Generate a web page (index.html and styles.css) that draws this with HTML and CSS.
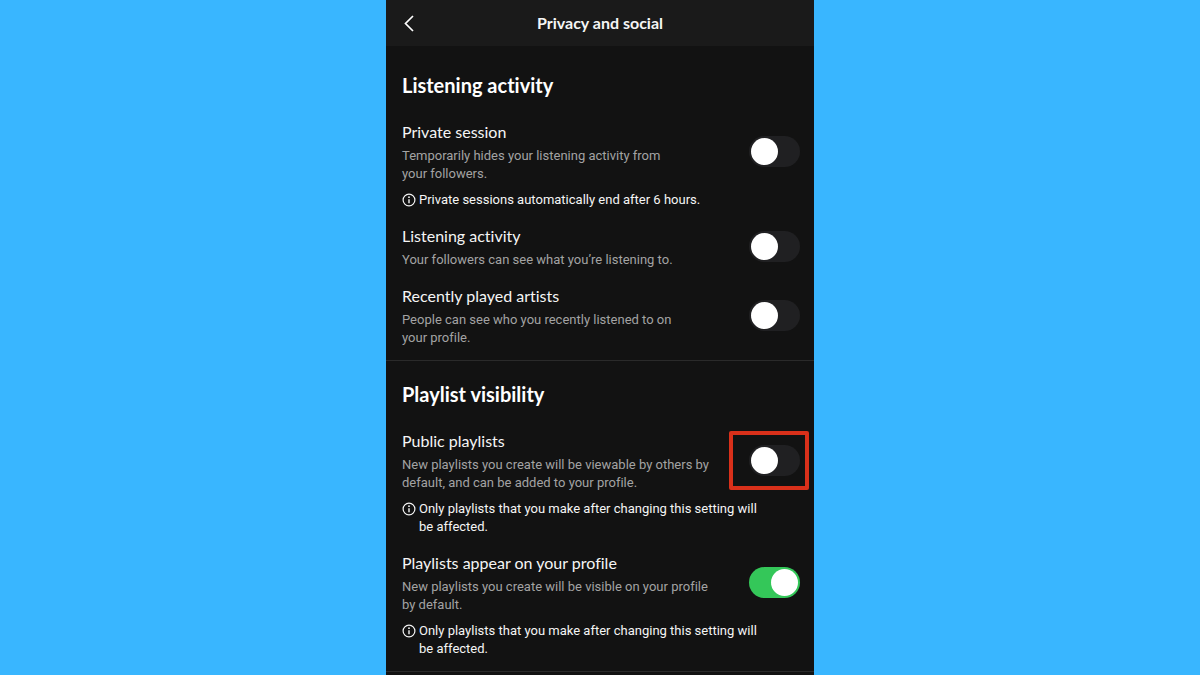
FILE: index.html
```
<!DOCTYPE html>
<html lang="en">
<head>
    <meta charset="UTF-8">
    <meta name="viewport" content="width=device-width, initial-scale=1.0">
    <title>Privacy and social</title>
    <link rel="stylesheet" href="styles.css">
</head>
<body>
    <svg class="sprite" aria-hidden="true">
        <symbol id="info" viewBox="0 0 14 14">
            <circle cx="7" cy="7" r="5.9" fill="none" stroke="currentColor" stroke-width="1.2"/>
            <path d="M7 6.2v4" stroke="currentColor" stroke-width="1.4"/>
            <circle cx="7" cy="4.2" r=".9" fill="currentColor"/>
        </symbol>
    </svg>
    <div class="screen">
        <header class="topbar">
            <button class="back" type="button" aria-label="Back">
                <svg width="12" height="18" viewBox="0 0 12 18" fill="none" stroke="currentColor" stroke-width="1.7">
                    <path d="M10 2 2.5 9.5 10 17"/>
                </svg>
            </button>
            <h1>Privacy and social</h1>
        </header>

        <main>
            <section>
                <h2>Listening activity</h2>

                <div class="item">
                    <div class="row">
                        <div class="text narrow">
                            <label for="private">Private session</label>
                            <p>Temporarily hides your listening activity from your followers.</p>
                        </div>
                        <input class="toggle" type="checkbox" id="private">
                    </div>
                    <div class="note">
                        <svg><use href="#info"/></svg>
                        <p>Private sessions automatically end after 6 hours.</p>
                    </div>
                </div>

                <div class="item">
                    <div class="row">
                        <div class="text">
                            <label for="activity">Listening activity</label>
                            <p>Your followers can see what you’re listening to.</p>
                        </div>
                        <input class="toggle" type="checkbox" id="activity">
                    </div>
                </div>

                <div class="item">
                    <div class="row">
                        <div class="text narrow">
                            <label for="artists">Recently played artists</label>
                            <p>People can see who you recently listened to on your profile.</p>
                        </div>
                        <input class="toggle" type="checkbox" id="artists">
                    </div>
                </div>
            </section>

            <section>
                <h2>Playlist visibility</h2>

                <div class="item">
                    <div class="row">
                        <div class="text">
                            <label for="public">Public playlists</label>
                            <p>New playlists you create will be viewable by others by default, and can be added to your profile.</p>
                        </div>
                        <div class="marked">
                            <input class="toggle" type="checkbox" id="public">
                        </div>
                    </div>
                    <div class="note">
                        <svg><use href="#info"/></svg>
                        <p>Only playlists that you make after changing this setting will be affected.</p>
                    </div>
                </div>

                <div class="item">
                    <div class="row">
                        <div class="text">
                            <label for="profile">Playlists appear on your profile</label>
                            <p>New playlists you create will be visible on your profile by default.</p>
                        </div>
                        <input class="toggle" type="checkbox" id="profile" checked>
                    </div>
                    <div class="note">
                        <svg><use href="#info"/></svg>
                        <p>Only playlists that you make after changing this setting will be affected.</p>
                    </div>
                </div>
            </section>
        </main>
    </div>
</body>
</html>
```

FILE: styles.css
```
* {
    box-sizing: border-box;
}
body {
    margin: 0;
    background-color: #39b6ff;
    color: #f5f5f5;
    font-family: Lato, "Open Sans", sans-serif;
    font-size: 16px;
    font-variant-ligatures: none;
    line-height: 24px;
}
h1, h2, p {
    margin: 0;
}
p {
    font-family: Roboto, sans-serif;
    font-size: 13px;
    line-height: 18px;
}
.sprite {
    display: none;
}
.screen {
    max-width: 428px;
    min-height: 100vh;
    margin: 0 auto;
    background-color: #121212;
}
.topbar {
    display: grid;
    grid-template-columns: 30px 1fr 30px;
    align-items: center;
    height: 46px;
    padding: 0 8px;
    background-color: #1a1a1a;
}
.topbar h1 {
    font-size: 16px;
    font-weight: 700;
    text-align: center;
}
.back {
    display: flex;
    justify-content: center;
    padding: 4px;
    border: none;
    background: none;
    color: #fff;
    cursor: pointer;
}
main {
    padding-top: 6px;
}
section {
    padding: 19px 14px 13px 16px;
    border-bottom: 1px solid #2a2a2a;
}
h2 {
    margin-bottom: 21px;
    color: #fff;
    font-size: 20px;
    font-weight: 700;
    line-height: 28px;
}
.item + .item {
    margin-top: 15px;
}
.row {
    display: flex;
    align-items: center;
    justify-content: space-between;
}
.text {
    max-width: 316px;
}
.narrow {
    max-width: 280px;
}
.text label {
    display: block;
    margin-bottom: 3px;
}
.text p {
    color: #a3a3a3;
}
.note {
    display: flex;
    gap: 3px;
    max-width: 365px;
    margin-top: 8px;
}
.note svg {
    flex: none;
    width: 14px;
    height: 18px;
}
.toggle {
    appearance: none;
    flex: none;
    display: block;
    width: 51px;
    height: 31px;
    margin: 0;
    padding: 2px;
    border-radius: 16px;
    background-color: #202022;
    cursor: pointer;
}
.toggle::before {
    content: "";
    display: block;
    width: 27px;
    height: 27px;
    border-radius: 50%;
    background-color: #fff;
}
.toggle:checked {
    background-color: #34c759;
}
.toggle:checked::before {
    margin-left: auto;
}
/* red frame around the switch */
.marked {
    position: relative;
}
.marked::after {
    content: "";
    position: absolute;
    inset: -14px -9px -14px -20px;
    border: 4px solid #d9301a;
    border-radius: 2px;
    pointer-events: none;
}
```
